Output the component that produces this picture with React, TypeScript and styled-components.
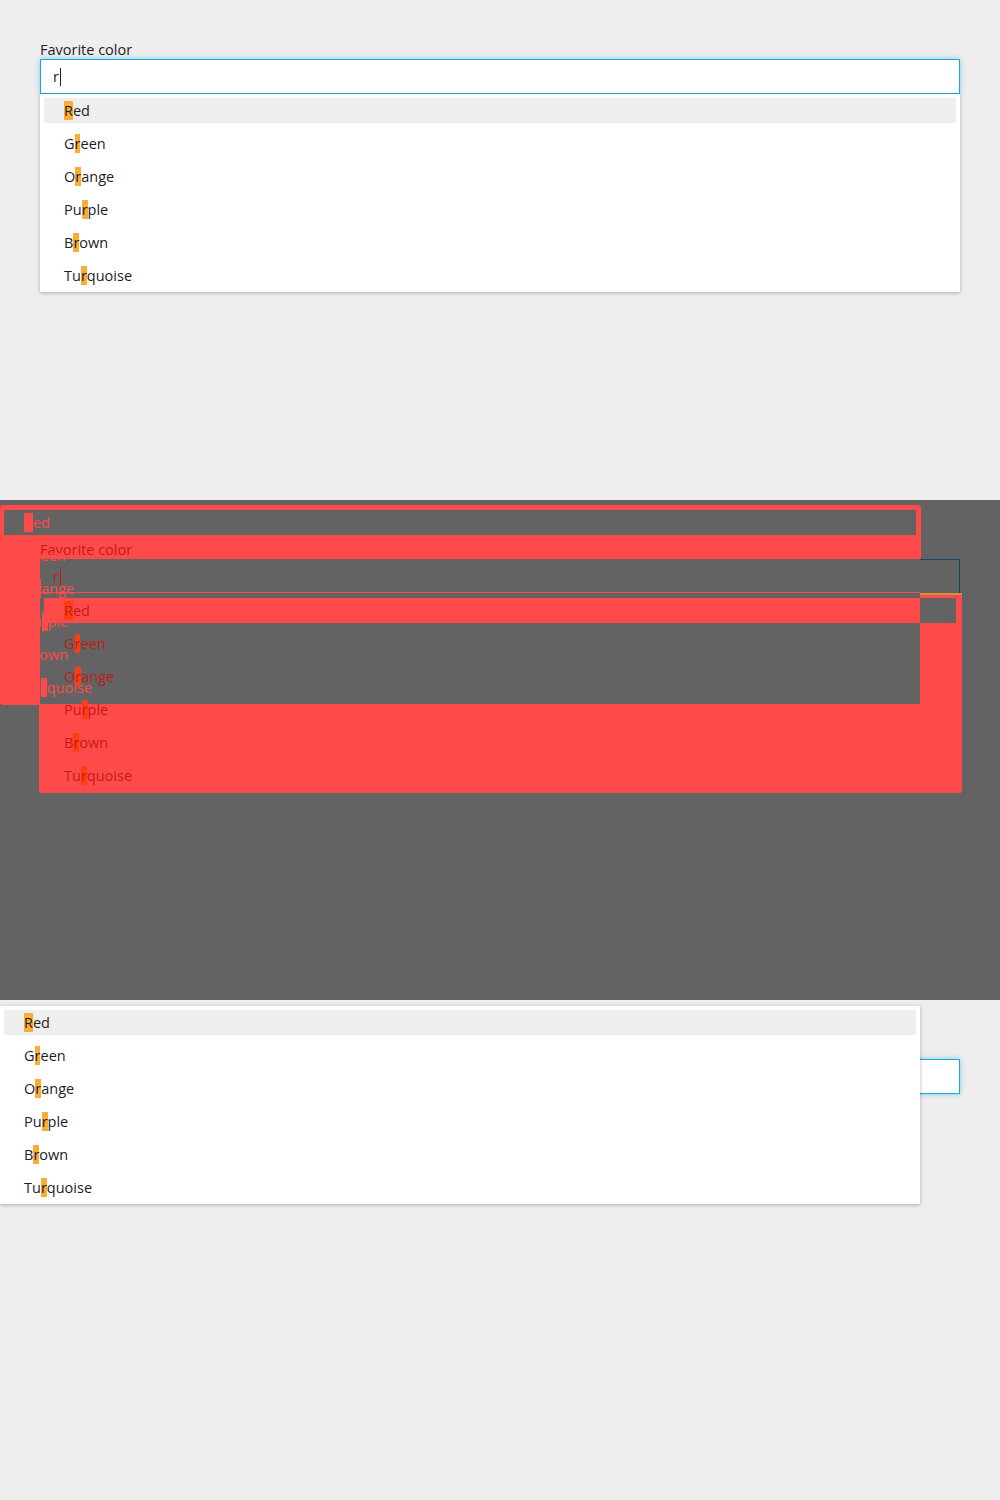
import React from "react";
import styled, { createGlobalStyle } from "styled-components";

type Tone = "normal" | "ghostA" | "ghostB";

const Global = createGlobalStyle`
  html, body { margin: 0; padding: 0; background: #eeeeee; }
  body { font-family: "Open Sans", "Noto Sans", sans-serif; }
`;

const textColor = (t: Tone) => (t === "normal" ? "#1d1d28" : t === "ghostA" ? "#c41a1a" : "#ff4a4a");
const matchColor = (t: Tone) => (t === "normal" ? "#fbad34" : t === "ghostA" ? "#ff3d12" : "#ff4a4a");

const Page = styled.div`
  width: 1000px;
  display: flex;
  flex-direction: column;
`;

const Panel = styled.section<{ $dark?: boolean }>`
  position: relative;
  height: 500px;
  box-sizing: border-box;
  padding: 40px 40px 0;
  background: ${(p) => (p.$dark ? "#636363" : "#eeeeee")};
  overflow: hidden;
`;

const Field = styled.div`
  position: relative;
  z-index: 1;
  display: flex;
  flex-direction: column;
`;

const Label = styled.label<{ $tone: Tone }>`
  font-size: 14.5px;
  line-height: 19px;
  color: ${(p) => textColor(p.$tone)};
`;

const InputBox = styled.div<{ $tone: Tone }>`
  height: 35px;
  box-sizing: border-box;
  display: flex;
  align-items: center;
  padding: 0 12px;
  font-size: 14.5px;
  color: ${(p) => textColor(p.$tone)};
  background: ${(p) => (p.$tone === "normal" ? "#ffffff" : "transparent")};
  border: 1px solid ${(p) => (p.$tone === "normal" ? "#1aa9dc" : "transparent")};
  box-shadow: ${(p) => (p.$tone === "normal" ? "0 0 5px rgba(26,169,220,0.55)" : "none")};
`;

const Caret = styled.span<{ $tone: Tone }>`
  display: inline-block;
  width: 1px;
  height: 18px;
  margin-left: 1px;
  background: ${(p) => textColor(p.$tone)};
`;

const Listbox = styled.ul<{ $tone: Tone; $misplaced?: boolean }>`
  position: absolute;
  z-index: 2;
  margin: 0;
  list-style: none;
  box-sizing: border-box;
  padding: 4px;
  display: flex;
  flex-direction: column;
  gap: 8px;
  background: ${(p) => (p.$tone === "normal" ? "#ffffff" : "transparent")};
  box-shadow: ${(p) => (p.$tone === "normal" ? "0 1px 4px rgba(0,0,0,0.28)" : "none")};
  ${(p) =>
    p.$misplaced
      ? `left: 0; top: 6px; width: 920px;`
      : `left: 0; right: 0; top: 100%;`}
`;

const Option = styled.li<{ $tone: Tone; $active?: boolean }>`
  height: 25px;
  display: flex;
  align-items: center;
  padding-left: 20px;
  font-size: 14.5px;
  color: ${(p) => textColor(p.$tone)};
  background: ${(p) => (p.$active && p.$tone === "normal" ? "#eeeeee" : "transparent")};
  white-space: pre;
`;

const Match = styled.span<{ $tone: Tone }>`
  background: ${(p) => matchColor(p.$tone)};
`;

const DiffRect = styled.div<{ $x: number; $y: number; $w: number; $h: number; $c: string; $r?: number }>`
  position: absolute;
  z-index: 0;
  left: ${(p) => p.$x}px;
  top: ${(p) => p.$y}px;
  width: ${(p) => p.$w}px;
  height: ${(p) => p.$h}px;
  background: ${(p) => p.$c};
  border-radius: ${(p) => p.$r ?? 0}px;
`;

const COLORS = ["Red", "Green", "Orange", "Purple", "Brown", "Turquoise"];
const QUERY = "r";

function Highlighted({ text, tone }: { text: string; tone: Tone }) {
  const i = text.toLowerCase().indexOf(QUERY);
  if (i < 0) return <>{text}</>;
  return (
    <>
      {text.slice(0, i)}
      <Match $tone={tone}>{text.slice(i, i + QUERY.length)}</Match>
      {text.slice(i + QUERY.length)}
    </>
  );
}

function Options({ tone, misplaced }: { tone: Tone; misplaced?: boolean }) {
  return (
    <Listbox $tone={tone} $misplaced={misplaced} role="listbox">
      {COLORS.map((c, idx) => (
        <Option key={c} $tone={tone} $active={idx === 0} role="option">
          <Highlighted text={c} tone={tone} />
        </Option>
      ))}
    </Listbox>
  );
}

function ColorField({ tone, withList }: { tone: Tone; withList: boolean }) {
  return (
    <Field>
      <Label $tone={tone}>Favorite color</Label>
      <InputBox $tone={tone}>
        {QUERY}
        <Caret $tone={tone} />
      </InputBox>
      {withList && <Options tone={tone} />}
    </Field>
  );
}

const RED = "#ff4a4a";
const GRAY = "#636363";

const DIFF_RECTS: { x: number; y: number; w: number; h: number; c: string; r?: number }[] = [
  { x: 0, y: 5, w: 921, h: 200, c: RED, r: 3 },
  { x: 39, y: 94, w: 923, h: 199, c: RED, r: 2 },
  { x: 4, y: 10, w: 912, h: 25, c: GRAY },
  { x: 40, y: 59, w: 880, h: 35, c: GRAY },
  { x: 40, y: 94, w: 880, h: 110, c: GRAY },
  { x: 44, y: 98, w: 876, h: 25, c: RED },
  { x: 920, y: 98, w: 36, h: 25, c: GRAY },
  { x: 920, y: 59, w: 40, h: 35, c: "#0e4a60" },
  { x: 920, y: 60, w: 39, h: 33, c: GRAY },
  { x: 40, y: 92, w: 880, h: 1, c: RED },
  { x: 920, y: 93, w: 42, h: 2, c: "#d4903c" },
];

export default function App() {
  return (
    <Page>
      <Global />
      <Panel>
        <ColorField tone="normal" withList />
      </Panel>
      <Panel $dark>
        {DIFF_RECTS.map((r, i) => (
          <DiffRect key={i} $x={r.x} $y={r.y} $w={r.w} $h={r.h} $c={r.c} $r={r.r} />
        ))}
        <ColorField tone="ghostA" withList />
        <Options tone="ghostB" misplaced />
      </Panel>
      <Panel>
        <ColorField tone="normal" withList={false} />
        <Options tone="normal" misplaced />
      </Panel>
    </Page>
  );
}
